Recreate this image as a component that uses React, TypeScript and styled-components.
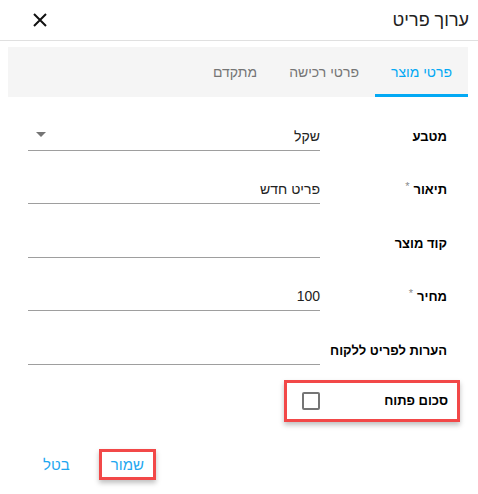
import React from "react";
import styled, { createGlobalStyle } from "styled-components";

const GlobalStyle = createGlobalStyle`
  html, body {
    margin: 0;
    padding: 0;
    background: #ffffff;
  }
  body {
    font-family: "Liberation Sans", Arial, sans-serif;
    color: #212121;
  }
`;

const Dialog = styled.div`
  direction: rtl;
  width: 478px;
  height: 494px;
  background: #fff;
  display: flex;
  flex-direction: column;
`;

const Header = styled.div`
  height: 40px;
  border-bottom: 1px solid #e0e0e0;
  display: flex;
  align-items: center;
  justify-content: space-between;
  padding: 0 9px 0 32px;
`;

const Title = styled.h2`
  margin: 0;
  font-size: 18px;
  font-weight: 400;
  color: #212121;
`;

const CloseButton = styled.button`
  border: 0;
  background: none;
  padding: 0;
  width: 16px;
  height: 16px;
  display: flex;
  align-items: center;
  justify-content: center;
  cursor: pointer;
`;

const Tabs = styled.div`
  margin: 6px 10px 0 8px;
  height: 50px;
  background: #f5f5f5;
  display: flex;
  align-items: stretch;
`;

const Tab = styled.div<{ $active?: boolean }>`
  padding: 3px 16px 0;
  display: flex;
  align-items: center;
  font-size: 14px;
  color: ${({ $active }) => ($active ? "#03a9f4" : "#757575")};
  border-bottom: 3px solid
    ${({ $active }) => ($active ? "#03a9f4" : "transparent")};
`;

const Form = styled.div`
  padding: 0 31px 0 28px;
  display: flex;
  flex-direction: column;
`;

const FormRow = styled.div`
  height: 53.5px;
  display: flex;
  align-items: flex-end;
`;

const Label = styled.label`
  flex: 1;
  line-height: 28px;
  font-size: 13px;
  font-weight: 700;
  color: #000;
  white-space: nowrap;
`;

const Required = styled.span`
  color: #8a8a8a;
  font-size: 11px;
  font-weight: 400;
  margin-right: 4px;
  position: relative;
  top: -4px;
`;

const Field = styled.div`
  width: 292px;
  height: 28px;
  border-bottom: 1px solid #9e9e9e;
  display: flex;
  align-items: center;
  justify-content: space-between;
  font-size: 14px;
  color: #222;
`;

const Caret = styled.span`
  width: 0;
  height: 0;
  margin-left: 8px;
  margin-bottom: 3px;
  border-left: 5px solid transparent;
  border-right: 5px solid transparent;
  border-top: 5px solid #757575;
`;

const CheckRow = styled.div`
  align-self: flex-start;
  margin: 15px -13px 0 0;
  width: 146px;
  height: 36px;
  border: 3px solid #f24848;
  box-shadow: 0 3px 5px rgba(0, 0, 0, 0.25);
  display: flex;
  align-items: center;
  justify-content: space-between;
  padding: 0 9px 0 15px;
`;

const CheckLabel = styled.span`
  font-size: 13px;
  font-weight: 700;
  color: #000;
`;

const Checkbox = styled.span`
  width: 14px;
  height: 14px;
  border: 2px solid #757575;
  border-radius: 2px;
`;

const Actions = styled.div`
  margin-top: auto;
  padding: 0 0 14px 31px;
  display: flex;
  justify-content: flex-end;
  gap: 17px;
`;

const ActionButton = styled.button<{ $highlight?: boolean }>`
  font-family: "Liberation Sans", Arial, sans-serif;
  font-size: 15px;
  color: #1ea7f0;
  background: none;
  padding: 4px 9px;
  border: 3px solid
    ${({ $highlight }) => ($highlight ? "#f24848" : "transparent")};
  box-shadow: ${({ $highlight }) =>
    $highlight ? "0 3px 5px rgba(0, 0, 0, 0.25)" : "none"};
  cursor: pointer;
`;

const fields = [
  { label: "מטבע", value: "שקל", required: false, select: true },
  { label: "תיאור", value: "פריט חדש", required: true },
  { label: "קוד מוצר", value: "", required: false },
  { label: "מחיר", value: "100", required: true },
  { label: "הערות לפריט ללקוח", value: "", required: false },
];

const App: React.FC = () => {
  return (
    <>
      <GlobalStyle />
      <Dialog>
        <Header>
          <Title>ערוך פריט</Title>
          <CloseButton aria-label="close">
            <svg width="14" height="14" viewBox="0 0 14 14">
              <path
                d="M1 1 L13 13 M13 1 L1 13"
                stroke="#111"
                strokeWidth="2"
                fill="none"
              />
            </svg>
          </CloseButton>
        </Header>

        <Tabs>
          <Tab $active>פרטי מוצר</Tab>
          <Tab>פרטי רכישה</Tab>
          <Tab>מתקדם</Tab>
        </Tabs>

        <Form>
          {fields.map((f) => (
            <FormRow key={f.label}>
              <Label>
                {f.label}
                {f.required && <Required>*</Required>}
              </Label>
              <Field>
                <span>{f.value}</span>
                {f.select && <Caret />}
              </Field>
            </FormRow>
          ))}

          <CheckRow>
            <CheckLabel>סכום פתוח</CheckLabel>
            <Checkbox />
          </CheckRow>
        </Form>

        <Actions>
          <ActionButton $highlight>שמור</ActionButton>
          <ActionButton>בטל</ActionButton>
        </Actions>
      </Dialog>
    </>
  );
};

export default App;
